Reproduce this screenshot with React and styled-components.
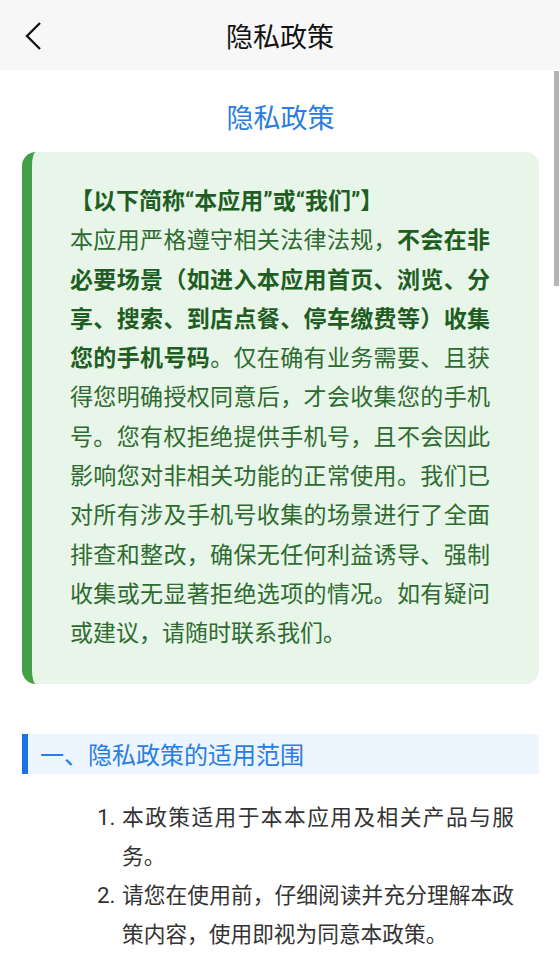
import React from "react";
import styled, { createGlobalStyle } from "styled-components";

const Global = createGlobalStyle`
  html, body { margin: 0; padding: 0; background: #ffffff; }
  body { font-family: Roboto, "Noto Sans CJK SC", "Noto Sans", sans-serif; }
  * { box-sizing: border-box; }
`;

const Screen = styled.div`
  width: 560px;
  height: 962px;
  display: flex;
  flex-direction: column;
  overflow: hidden;
  background: #ffffff;
`;

const Header = styled.header`
  height: 70px;
  flex: none;
  background: #f7f7f7;
  display: grid;
  grid-template-columns: 70px 1fr 70px;
  align-items: center;
`;

const BackButton = styled.button`
  border: 0;
  background: transparent;
  padding: 2px 0 0 22px;
  height: 70px;
  display: flex;
  align-items: center;
  cursor: pointer;
`;

const HeaderTitle = styled.h1`
  margin: 0;
  text-align: center;
  font-size: 27px;
  font-weight: 400;
  color: #111111;
`;

const Body = styled.main`
  flex: 1;
  position: relative;
  overflow: hidden;
`;

const Content = styled.div`
  padding: 30px 21px 0 22px;
  display: flex;
  flex-direction: column;
`;

const PageTitle = styled.h2`
  margin: 0 0 13px;
  text-align: center;
  font-size: 27px;
  line-height: 39px;
  font-weight: 400;
  color: #2a7de1;
`;

const Card = styled.section`
  background: #e8f5e9;
  border-left: 10px solid #43a047;
  border-radius: 14px;
  padding: 30px 49px 30px 38px;
  color: #2e6b30;
  font-size: 23px;
  line-height: 39.3px;
  text-align: justify;
`;

const CardHeading = styled.div`
  font-weight: 700;
  color: #1f5e22;
`;

const CardText = styled.p`
  margin: 0;
`;

const Strong = styled.b`
  font-weight: 700;
  color: #1f5e22;
`;

const SectionHeader = styled.h3`
  margin: 50px 0 0;
  height: 40px;
  display: flex;
  align-items: center;
  background: #edf5fe;
  border-left: 6px solid #1a73e8;
  padding-left: 12px;
  font-size: 24px;
  font-weight: 400;
  color: #2a7de1;
`;

const List = styled.ol`
  list-style: none;
  margin: 24px 0 0;
  padding: 0 25px 0 75px;
  display: flex;
  flex-direction: column;
`;

const Item = styled.li`
  display: grid;
  grid-template-columns: 25px 1fr;
  font-size: 21.7px;
  line-height: 39.3px;
  color: #333333;
  text-align: justify;
`;

const Num = styled.span`
  font-family: Roboto, sans-serif;
  font-size: 22.4px;
  text-align: left;
`;

const ScrollThumb = styled.div`
  position: absolute;
  top: 1px;
  right: 1px;
  width: 5px;
  height: 215px;
  background: #b4b4b4;
`;

export default function App() {
  return (
    <Screen>
      <Global />
      <Header>
        <BackButton aria-label="返回">
          <svg width="20" height="30" viewBox="0 0 20 30">
            <polyline
              points="18,2 5,15 18,28"
              fill="none"
              stroke="#111"
              strokeWidth="2.3"
              strokeLinecap="butt"
              strokeLinejoin="miter"
            />
          </svg>
        </BackButton>
        <HeaderTitle>隐私政策</HeaderTitle>
        <span />
      </Header>
      <Body>
        <Content>
          <PageTitle>隐私政策</PageTitle>
          <Card>
            <CardHeading>【以下简称“本应用”或“我们”】</CardHeading>
            <CardText>
              本应用严格遵守相关法律法规，
              <Strong>
                不会在非必要场景（如进入本应用首页、浏览、分享、搜索、到店点餐、停车缴费等）收集您的手机号码
              </Strong>
              。仅在确有业务需要、且获得您明确授权同意后，才会收集您的手机号。您有权拒绝提供手机号，且不会因此影响您对非相关功能的正常使用。我们已对所有涉及手机号收集的场景进行了全面排查和整改，确保无任何利益诱导、强制收集或无显著拒绝选项的情况。如有疑问或建议，请随时联系我们。
            </CardText>
          </Card>
          <SectionHeader>一、隐私政策的适用范围</SectionHeader>
          <List>
            <Item>
              <Num>1.</Num>
              <span>本政策适用于本本应用及相关产品与服务。</span>
            </Item>
            <Item>
              <Num>2.</Num>
              <span>请您在使用前，仔细阅读并充分理解本政策内容，使用即视为同意本政策。</span>
            </Item>
          </List>
        </Content>
        <ScrollThumb />
      </Body>
    </Screen>
  );
}
